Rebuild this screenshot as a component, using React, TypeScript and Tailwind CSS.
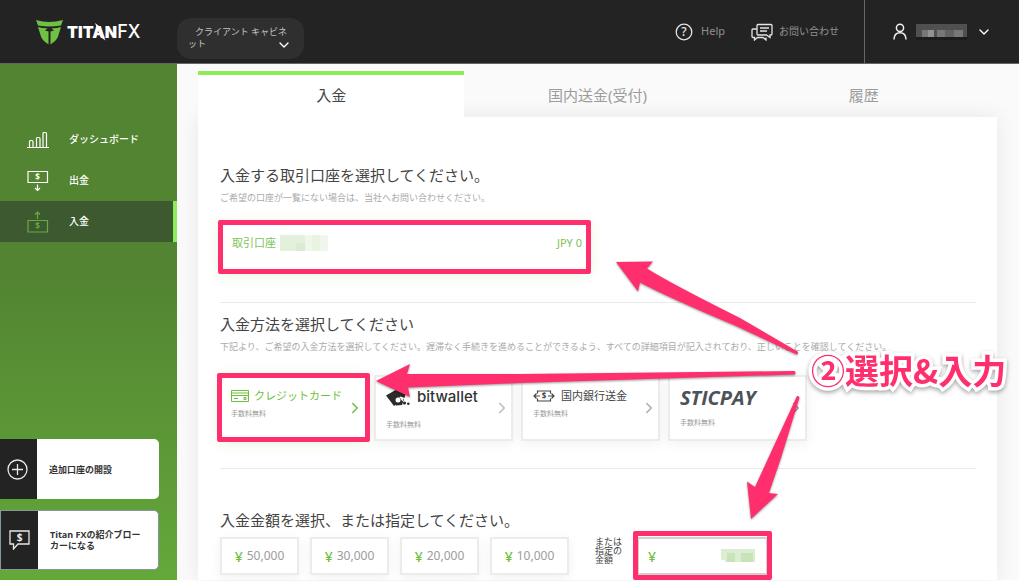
import * as React from 'react';
import { ChevronDown, ChevronRight } from 'lucide-react';

const amounts = ['50,000', '30,000', '20,000', '10,000'];

const Logo: React.FC = () => (
  <span className="relative flex items-center gap-[3px] whitespace-nowrap font-['Inter',sans-serif] text-[16px] leading-6 text-white">
    <svg width="28" height="26" viewBox="0 0 28 26" fill="#6fc043" aria-hidden="true">
      <path d="M0 1 Q13 5 27 1 L25 6.500 Q13 8.500 2 6.500 Z" />
      <path d="M2 8 Q7 9.500 11.500 9.300 L9 11.500 L12.500 12.500 V25.500 Q5 20.500 4.500 16 Z" />
      <path d="M25 8 Q20 9.500 15.500 9.300 L18 11.500 L14.500 12.500 V25.500 Q22 20.500 22.500 16 Z" />
    </svg>
    <span className="flex items-center">
      <span className="font-black">TITAN</span>
      <span className="text-[18px] font-medium">FX</span>
    </span>
    <svg className="absolute left-[58px] top-1" width="12" height="18" viewBox="0 0 12 18" aria-hidden="true">
      <path d="M1 0 L5.500 3.500 L11.500 17.500 L6.500 14 Z" fill="#fff" />
    </svg>
  </span>
);

const BarsIcon: React.FC = () => (
  <svg width="22" height="18" viewBox="0 0 22 18" fill="none" stroke="currentColor" strokeWidth="1.200" aria-hidden="true">
    <path d="M0 16.500h22M2.500 16V10.500a1 1 0 0 1 1-1h1.500a1 1 0 0 1 1 1V16M9.500 16V7.500a1 1 0 0 1 1-1H12a1 1 0 0 1 1 1V16M16 16V2.500a1 1 0 0 1 1-1h1.500a1 1 0 0 1 1 1V16" />
  </svg>
);

const Dollar: React.FC<{ x: number; y: number; size: number }> = ({ x, y, size }) => (
  <text x={x} y={y} fontSize={size} textAnchor="middle" fill="currentColor" stroke="none" className="font-bold">
    $
  </text>
);

const WithdrawIcon: React.FC = () => (
  <svg width="22" height="22" viewBox="0 0 22 22" fill="none" stroke="currentColor" strokeWidth="1.200" aria-hidden="true">
    <path d="M1 1.500h19.500v11H1zM10.500 14.500v6M8 18l2.500 2.500L13 18" />
    <Dollar x={10.5} y={10} size={8} />
  </svg>
);

const DepositIcon: React.FC = () => (
  <svg width="22" height="22" viewBox="0 0 22 22" fill="none" stroke="currentColor" strokeWidth="1.200" aria-hidden="true">
    <path d="M1 9.500h19.500v11.500H1zM10.500 8V1M8 3.500L10.500 1L13 3.500" />
    <Dollar x={10.5} y={18} size={8} />
  </svg>
);

const HelpIcon: React.FC = () => (
  <svg width="18" height="18" viewBox="0 0 18 18" fill="none" stroke="#e4e4e4" strokeWidth="1.300" aria-hidden="true">
    <circle cx="9" cy="9" r="7.800" />
    <text x="9" y="13" fontSize="12" textAnchor="middle" fill="#e4e4e4" stroke="none" className="font-medium">
      ?
    </text>
  </svg>
);

const ChatIcon: React.FC = () => (
  <svg width="22" height="18" viewBox="0 0 22 18" fill="none" stroke="#e4e4e4" strokeWidth="1.300" aria-hidden="true">
    <path d="M7 1.500h13a1 1 0 0 1 1 1v8.500a1 1 0 0 1-1 1h-1v2.500L15.500 12H7a1 1 0 0 1-1-1V2.500a1 1 0 0 1 1-1zM9 5h9M9 8h7" />
    <path d="M6 6H2a1 1 0 0 0-1 1v6.500a1 1 0 0 0 1 1h1.500V17L6.500 14.500H12L15 17v-2.500" />
  </svg>
);

const UserIcon: React.FC = () => (
  <svg width="14" height="17" viewBox="0 0 14 17" fill="none" stroke="#f0f0f0" strokeWidth="1.500" aria-hidden="true">
    <circle cx="7" cy="4.800" r="3.600" />
    <path d="M1 16.500Q1.200 9.800 7 9.800T13 16.500" />
  </svg>
);

const PlusIcon: React.FC = () => (
  <svg width="21" height="21" viewBox="0 0 21 21" fill="none" stroke="#e8e8e8" strokeWidth="1.300" aria-hidden="true">
    <circle cx="10.500" cy="10.500" r="9.500" />
    <path d="M10.500 5v11M5 10.500h11" />
  </svg>
);

const BrokerIcon: React.FC = () => (
  <svg width="21" height="20" viewBox="0 0 21 20" fill="none" stroke="#e8e8e8" strokeWidth="1.300" className="text-[#e8e8e8]" aria-hidden="true">
    <path d="M1 1h19v13H9l-4.500 5V14H1z" />
    <Dollar x={10.5} y={11} size={10} />
  </svg>
);

const CardIcon: React.FC = () => (
  <svg width="18" height="12" viewBox="0 0 18 12" fill="none" stroke="currentColor" aria-hidden="true">
    <path d="M.5.5h17v11H.5zM.5 3h17M.5 5.500h17M3 8.500h4M13 7.500h2v2h-2z" />
  </svg>
);

const BankIcon: React.FC = () => (
  <svg width="22" height="12" viewBox="0 0 22 12" fill="none" stroke="#444" strokeWidth="1.200" aria-hidden="true">
    <path d="M4.500 3.500V1h13v2.500M4.500 8.500V11h13V8.500M7 6H1M3.500 3.500L1 6l2.500 2.500M15 6h6M18.500 3.500L21 6l-2.500 2.500" />
    <Dollar x={11} y={9} size={8} />
  </svg>
);

const WalletIcon: React.FC = () => (
  <svg width="24" height="18" viewBox="0 0 24 18" fill="#2b2b2b" aria-hidden="true">
    <path d="M0 7.500L13 0l7 5-1.500 5-4-1.500-3 2-1 6-2.500 1.500Z" />
    <path d="M9 12l3-3 6 2-2 6-6 .500z" />
    <circle cx="12" cy="12" r="2.500" fill="#fff" />
    <path d="M13.500 9l4 1.500-1 3z" fill="#fff" />
    <circle cx="18.500" cy="15" r="1.600" />
    <circle cx="22.300" cy="15.800" r="1.300" />
  </svg>
);

// outline drawn over a step the reader has to fill in
const Marker: React.FC<{ className: string }> = ({ className }) => (
  <span className={`pointer-events-none absolute z-10 rounded-[2px] border-[5px] border-[#ff2f6d] ${className}`} />
);

const Arrows: React.FC = () => (
  <svg
    className="pointer-events-none absolute left-[370px] top-[255px] z-20 drop-shadow-[0_1px_1px_rgba(0,0,0,0.4)]"
    width="440"
    height="270"
    viewBox="370 255 440 270"
    fill="#ff2f6d"
    aria-hidden="true"
  >
    <path d="M616 262L653 261.500L647 268.500Q670 283 740 318L797.500 351.500Q799 353.500 796.500 354.500L736 326Q665 296 640 282.500L638 291.500Z" />
    <path d="M376 381L410 364L407 374L520 374L794.500 371Q796.500 373 794.500 374.500L520 383L408 387.500L410 397Z" />
    <path d="M797 396Q799 395.500 799.500 397.500L781 458L769 493L778 494L751 519L747 481.500L755 487L772 450Z" />
  </svg>
);

const NameMosaic: React.FC = () => (
  <svg width="51" height="16" viewBox="0 0 51 16" aria-hidden="true">
    <path d="M0 0h51v13H0z" fill="#505050" />
    <path d="M6 6h9v7H6zM21 6h8v7h-8zM38 6h9v7h-9z" fill="#777" />
    <path d="M12 6h6v7h-6z" fill="#929292" />
    <path d="M29 6h9v7h-9z" fill="#626262" />
    <path d="M0 13h51v3H0z" fill="#1c1c1c" />
  </svg>
);

const AccountMosaic: React.FC = () => (
  <svg width="48" height="16" viewBox="0 0 48 16" aria-hidden="true">
    <path d="M0 0h48v16H0z" fill="#eff6eb" />
    <path d="M0 0h25v16H0z" fill="#e3f0dc" />
    <path d="M16 8h9v8h-9z" fill="#dbebd1" />
    <path d="M32 0h8v16h-8z" fill="#e8f3e2" />
  </svg>
);

const methodClass =
  'relative flex h-[66px] w-[139px] flex-col items-start border-2 border-[#ececec] bg-white pl-[10px] text-left text-[#999] shadow-[0_3px_12px_rgba(0,0,0,0.06)]';

const App: React.FC = () => {
  return (
    <div className="relative min-h-screen overflow-hidden bg-white pb-px pr-[5px] font-['Noto_Sans','Noto_Sans_CJK_JP',sans-serif] text-[#444]">
      <header className="flex h-16 items-center border-b border-[#666] bg-[#232323]">
        <a href="#home" className="ml-9 w-[141px] shrink-0">
          <Logo />
        </a>
        <button
          type="button"
          aria-haspopup="menu"
          className="relative mt-[13px] h-[41px] w-[127px] shrink-0 rounded-[14px] bg-[#2f2f2f] pl-[11px] text-left text-[9px] leading-3 text-[#c4c4c4]"
        >
          <span className="block w-[104px] break-all indent-[7px]">クライアント キャビネット</span>
          <ChevronDown size={16} className="absolute bottom-[6px] right-3 text-white" aria-hidden="true" />
        </button>
        <nav className="ml-auto flex h-full items-center text-[#909090]">
          <a href="#help" className="flex items-center gap-2 text-[11px]">
            <HelpIcon />
            Help
          </a>
          <a href="#contact" className="ml-[26px] mr-[25px] flex items-center gap-[6px] text-[10px]">
            <ChatIcon />
            お問い合わせ
          </a>
          <button type="button" aria-label="アカウント" className="flex h-full w-[155px] items-center border-l border-[#666] pl-[28px]">
            <UserIcon />
            <span className="ml-[9px] mr-[9px]">
              <NameMosaic />
            </span>
            <ChevronDown size={16} className="text-white" aria-hidden="true" />
          </button>
        </nav>
      </header>

      <div className="flex">
        <aside className="flex w-[177px] shrink-0 flex-col bg-linear-to-b from-[#528432] from-40% to-[#65a83a] pt-[55px]">
          <nav className="flex flex-col text-[10px] font-medium text-white">
            <a href="#dashboard" className="flex h-[41px] items-center gap-5 pl-[27px]">
              <BarsIcon />
              ダッシュボード
            </a>
            <a href="#withdraw" className="flex h-[41px] items-center gap-5 pl-[27px]">
              <WithdrawIcon />
              出金
            </a>
            <a
              href="#deposit"
              aria-current="page"
              className="flex h-[41px] items-center gap-5 border-r-4 border-[#8ced5a] bg-[#3c5930] pl-[27px]"
            >
              <span className="text-[#69ab43]">
                <DepositIcon />
              </span>
              入金
            </a>
          </nav>
          <div className="mt-auto flex flex-col gap-[11px] pb-[10px] text-[9px] font-bold leading-[11px] text-[#333]">
            <a href="#new-account" className="flex h-[60px] w-[159px] overflow-hidden rounded-r-[5px] bg-white">
              <span className="flex w-[37px] items-center justify-center bg-[#232323] pr-[3px]">
                <PlusIcon />
              </span>
              <span className="flex items-center pl-3">追加口座の開設</span>
            </a>
            <a href="#broker" className="flex h-[60px] w-[159px] overflow-hidden rounded-r-[5px] border border-[#8597a3] bg-white">
              <span className="flex w-[37px] items-center justify-center bg-[#232323]">
                <BrokerIcon />
              </span>
              <span className="flex w-[104px] items-center pl-3 font-['Open_Sans','Noto_Sans_CJK_JP',sans-serif]">
                Titan FXの紹介ブローカーになる
              </span>
            </a>
          </div>
        </aside>

        <main className="min-w-0 flex-1 bg-[#fafafa] pl-[21px] pr-[22px] pt-[7px]">
          <div role="tablist" className="grid grid-cols-3 text-[15px] text-[#9c9c9c]">
            <button type="button" role="tab" aria-selected="true" className="relative z-10 h-[46px] border-t-4 border-[#8ced5a] bg-white pb-[2px] text-[#444]">
              入金
            </button>
            <button type="button" role="tab" aria-selected="false" className="h-[46px] pt-[2px]">
              国内送金(受付)
            </button>
            <button type="button" role="tab" aria-selected="false" className="h-[46px] pt-[2px]">
              履歴
            </button>
          </div>

          <div className="bg-white pb-[5px] pl-[22px] pr-[21px] pt-[46px] shadow-[0_0_20px_rgba(0,0,0,0.08)]">
            <section>
              <h2 className="text-[15px] leading-6">入金する取引口座を選択してください。</h2>
              <p className="mt-[3px] text-[9px] leading-4 text-[#aaa]">
                ご希望の口座が一覧にない場合は、当社へお問い合わせください。
              </p>
              <button
                type="button"
                className="relative mt-4 flex h-[50px] w-[369px] items-start justify-between bg-white pl-3 pr-[7px] pt-[13px] text-[11px] leading-4 text-[#7dc355] shadow-[0_2px_14px_rgba(110,190,70,0.2)]"
              >
                <span className="flex items-center gap-1">
                  取引口座
                  <AccountMosaic />
                </span>
                <span>JPY 0</span>
                <Marker className="-inset-[2px]" />
              </button>
            </section>

            <section className="mt-[30px] border-t border-[#e9e9e9] pt-[9px]">
              <h2 className="text-[15px] leading-6">入金方法を選択してください</h2>
              <p className="mt-[3px] text-[9px] leading-4 text-[#aaa]">
                下記より、ご希望の入金方法を選択してください。遅滞なく手続きを進めることができるよう、すべての詳細項目が記入されており、正しいことを確認してください。
              </p>
              <div className="mt-5 flex gap-2 text-[7px] leading-3">
                <button
                  type="button"
                  className="relative flex h-[66px] w-[146px] flex-col items-start bg-white pl-[11px] pt-[13px] text-left text-[#999] shadow-[0_2px_14px_rgba(110,190,70,0.2)]"
                >
                  <span className="flex items-center gap-[5px] text-[11px] leading-4 text-[#6dbf3c]">
                    <CardIcon />
                    クレジットカード
                  </span>
                  <span className="mt-1">手数料無料</span>
                  <ChevronRight size={18} className="absolute right-[2px] top-[24px] text-[#6dbf3c]" aria-hidden="true" />
                  <Marker className="-bottom-px -left-[3px] -right-[4px] -top-[2px]" />
                </button>
                <button type="button" className={`${methodClass} pt-[10px]`}>
                  <span className="flex items-center gap-[7px] font-['Inter',sans-serif] text-[15px] font-medium leading-5 text-[#333]">
                    <WalletIcon />
                    bitwallet
                  </span>
                  <span className="mt-3">手数料無料</span>
                  <ChevronRight size={18} className="absolute right-0 top-[22px] text-[#bbb]" aria-hidden="true" />
                </button>
                <button type="button" className={`${methodClass} pt-[11px]`}>
                  <span className="flex items-center gap-[6px] text-[11px] leading-4 text-[#444]">
                    <BankIcon />
                    国内銀行送金
                  </span>
                  <span className="mt-1">手数料無料</span>
                  <ChevronRight size={18} className="absolute right-0 top-[22px] text-[#aaa]" aria-hidden="true" />
                </button>
                <button type="button" className={`${methodClass} pt-[11px]`}>
                  <span className="font-['Open_Sans',sans-serif] text-[20px] font-bold italic leading-5 text-[#4b5358]">STICPAY</span>
                  <span className="mt-[9px]">手数料無料</span>
                  <ChevronRight size={18} className="absolute right-0 top-[22px] text-[#999]" aria-hidden="true" />
                </button>
              </div>
            </section>

            <section className="mt-[27px] border-t border-[#e9e9e9] pt-[39px]">
              <h2 className="text-[15px] leading-6">入金金額を選択、または指定してください。</h2>
              <div className="mt-[5px] flex">
                <div className="flex gap-[11px]">
                  {amounts.map((amount) => (
                    <button
                      key={amount}
                      type="button"
                      className="flex h-[38px] w-[79px] items-center justify-center gap-1 border-2 border-[#ececec] bg-white text-[12px] text-[#9c9c9c] shadow-[0_3px_12px_rgba(0,0,0,0.06)]"
                    >
                      <span className="text-[14px] font-medium text-[#6dbf3c]">¥</span>
                      {amount}
                    </button>
                  ))}
                </div>
                <label htmlFor="amount" className="ml-[26px] w-[28px] text-[9px] leading-[9px]">
                  または指定の金額
                </label>
                <div className="relative ml-[14px] flex h-[38px] w-[131px] items-center border-2 border-[#d0d0d0] bg-white pl-[9px]">
                  <span className="text-[14px] font-medium text-[#6dbf3c]">¥</span>
                  <input id="amount" type="text" className="h-full w-full min-w-0 bg-transparent outline-none" />
                  <svg className="absolute right-[11px] top-[10px]" width="36" height="14" viewBox="0 0 36 14" aria-hidden="true">
                    <path d="M2 0h34v13H6V11H2z" fill="#dcedd1" />
                    <path d="M8 4h8v9H8zM22 4h12v9H22z" fill="#c9e3b9" />
                  </svg>
                  <Marker className="-bottom-[7px] -left-[6px] -right-[6px] -top-[8px]" />
                </div>
              </div>
            </section>
          </div>
        </main>
      </div>

      <Arrows />
      <p className="pointer-events-none absolute left-[811px] top-[350px] z-20 whitespace-nowrap font-['Noto_Sans_CJK_JP',sans-serif] text-[34px] font-bold leading-10 text-[#ff2f6d] drop-shadow-[0_2px_2px_rgba(0,0,0,0.35)] [-webkit-text-stroke:7px_white] [paint-order:stroke_fill]">
        ②選択&amp;入力
      </p>
    </div>
  );
};

export default App;
